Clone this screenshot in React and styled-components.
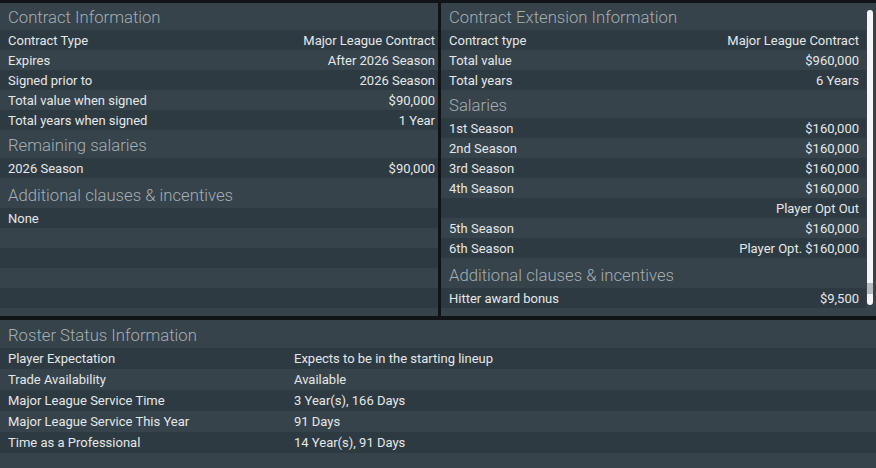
import React from "react";
import styled, { createGlobalStyle } from "styled-components";

const GlobalStyle = createGlobalStyle`
  html, body {
    margin: 0;
    padding: 0;
    background: #111416;
    font-family: Roboto, "Noto Sans", "Liberation Sans", sans-serif;
  }
`;

const LIGHT = "#36434b";
const DARK = "#2e3a42";

const Page = styled.div`
  width: 876px;
  height: 468px;
  padding-top: 3px;
  box-sizing: border-box;
  display: flex;
  flex-direction: column;
  gap: 4px;
  overflow: hidden;
`;

const TopRow = styled.div`
  display: flex;
  gap: 3px;
  height: 313px;
`;

const Panel = styled.div`
  background: ${LIGHT};
  display: flex;
  flex-direction: ${(p) => (p.$row ? "row" : "column")};
  width: ${(p) => p.$width || "auto"};
  flex: ${(p) => (p.$width ? "none" : "1")};
  overflow: hidden;
`;

const PanelBody = styled.div`
  flex: 1;
  display: flex;
  flex-direction: column;
`;

// section headings sit toward the bottom of their band
const Title = styled.div`
  height: ${(p) => p.$h || 28}px;
  display: flex;
  align-items: flex-end;
  line-height: 25px;
  padding-left: 8px;
  box-sizing: border-box;
  flex: none;
  font-size: 16.7px;
  font-weight: 300;
  color: #a5aeb3;
  background: ${LIGHT};
  white-space: nowrap;
`;

const Row = styled.div`
  height: ${(p) => p.$h || 20}px;
  flex: none;
  display: ${(p) => (p.$grid ? "grid" : "flex")};
  grid-template-columns: 294px 1fr;
  justify-content: space-between;
  align-items: center;
  padding: 0 ${(p) => (p.$grid ? 8 : p.$padR ?? 3)}px 0 ${(p) => (p.$grid ? 0 : 8)}px;
  background: ${(p) => (p.$dark ? DARK : LIGHT)};
  font-size: 13px;
  color: #e4e7e8;
  white-space: nowrap;
`;

const Label = styled.span`
  padding-left: ${(p) => (p.$indent ? 8 : 0)}px;
`;

const Value = styled.span`
  text-align: right;
`;

const ScrollTrack = styled.div`
  width: 10px;
  flex: none;
  padding: 7px 0 11px 1px;
  box-sizing: border-box;
`;

const ScrollThumb = styled.div`
  width: 6px;
  height: 100%;
  border-radius: 3px;
  background: linear-gradient(
    to bottom,
    #f4f5f5 0,
    #f4f5f5 273px,
    #b9bdbf 273px,
    #b9bdbf 284px,
    #f4f5f5 284px
  );
`;

const BottomPanel = styled.div`
  background: ${LIGHT};
  flex: 1;
  display: flex;
  flex-direction: column;
`;

function Section({ title, titleH, rows, fill = 0, padR }) {
  return (
    <>
      <Title $h={titleH}>{title}</Title>
      {rows.map(([label, value], i) => (
        <Row key={i} $dark={i % 2 === 0} $padR={padR}>
          <span>{label}</span>
          <Value>{value}</Value>
        </Row>
      ))}
      {Array.from({ length: fill }).map((_, i) => (
        <Row key={"f" + i} $dark={(rows.length + i) % 2 === 0} />
      ))}
    </>
  );
}

const contractInfo = [
  ["Contract Type", "Major League Contract"],
  ["Expires", "After 2026 Season"],
  ["Signed prior to", "2026 Season"],
  ["Total value when signed", "$90,000"],
  ["Total years when signed", "1 Year"],
];

const extensionInfo = [
  ["Contract type", "Major League Contract"],
  ["Total value", "$960,000"],
  ["Total years", "6 Years"],
];

const salaries = [
  ["1st Season", "$160,000"],
  ["2nd Season", "$160,000"],
  ["3rd Season", "$160,000"],
  ["4th Season", "$160,000"],
  ["", "Player Opt Out"],
  ["5th Season", "$160,000"],
  ["6th Season", "Player Opt. $160,000"],
];

const roster = [
  ["Player Expectation", "Expects to be in the starting lineup"],
  ["Trade Availability", "Available"],
  ["Major League Service Time", "3 Year(s), 166 Days"],
  ["Major League Service This Year", "91 Days"],
  ["Time as a Professional", "14 Year(s), 91 Days"],
];

export default function App() {
  return (
    <>
      <GlobalStyle />
      <Page>
        <TopRow>
          <Panel $width="438px">
            <Section title="Contract Information" titleH={27} rows={contractInfo} />
            <Section title="Remaining salaries" rows={[["2026 Season", "$90,000"]]} />
            <Section
              title="Additional clauses & incentives"
              titleH={30}
              rows={[["None", ""]]}
              fill={5}
            />
          </Panel>
          <Panel $row>
            <PanelBody>
              <Section title="Contract Extension Information" titleH={27} rows={extensionInfo} padR={7} />
              <Section title="Salaries" rows={salaries} padR={7} />
              <Section
                title="Additional clauses & incentives"
                titleH={30}
                rows={[["Hitter award bonus", "$9,500"]]}
                padR={7}
              />
            </PanelBody>
            <ScrollTrack>
              <ScrollThumb />
            </ScrollTrack>
          </Panel>
        </TopRow>
        <BottomPanel>
          <Title $h={28}>Roster Status Information</Title>
          {roster.map(([label, value], i) => (
            <Row key={i} $h={21} $grid $dark={i % 2 === 0}>
              <Label $indent>{label}</Label>
              <span>{value}</span>
            </Row>
          ))}
        </BottomPanel>
      </Page>
    </>
  );
}
